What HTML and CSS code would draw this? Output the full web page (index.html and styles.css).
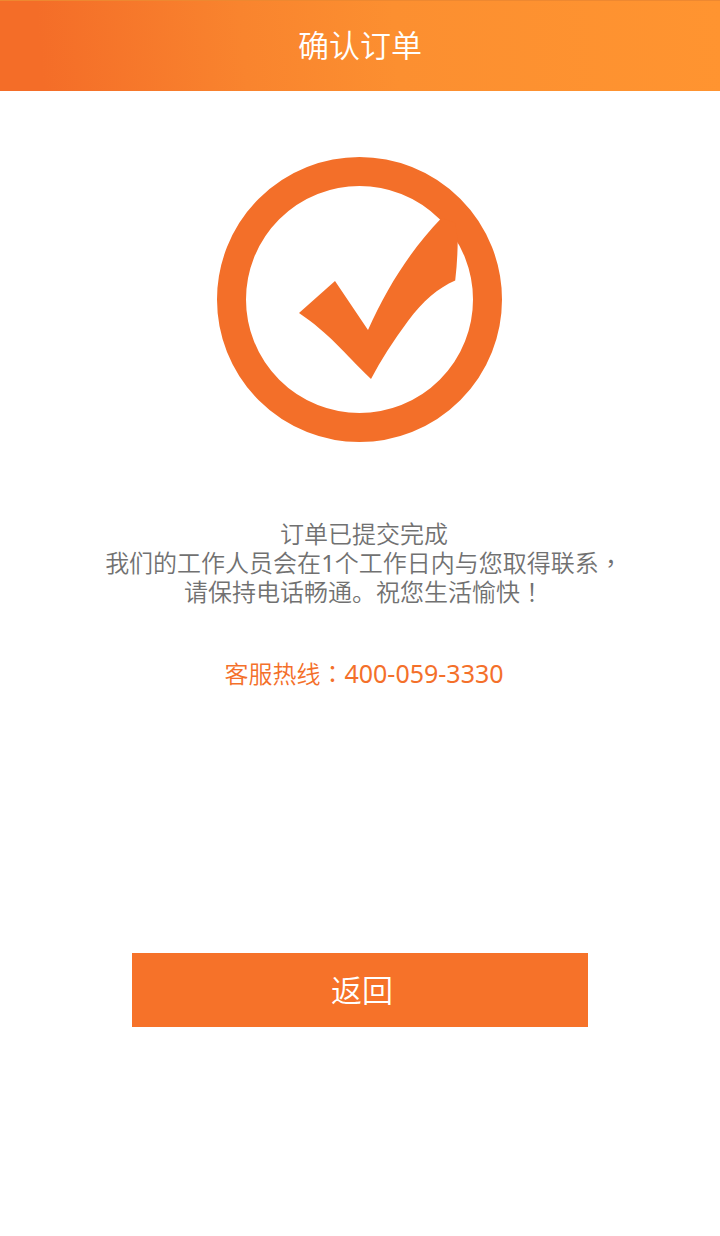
FILE: index.html
```html
<!DOCTYPE html>
<html lang="zh-CN">
<head>
<meta charset="utf-8">
<meta name="viewport" content="width=device-width, initial-scale=1">
<title>确认订单</title>
<link rel="stylesheet" href="styles.css">
</head>
<body>
<header class="header"><h1 class="title">确认订单</h1></header>
<main class="content">
<svg class="success-icon" viewBox="0 0 286 286" aria-hidden="true">
<circle class="ring" cx="142.5" cy="143.5" r="128"/>
<path class="tick" d="M82 157L118 125L151 174C170 132 192 96 224.500 62L238 67L240.700 82Q240.700 104 238.200 124.500C221 132 206 145 191 165Q168 196 154 223C126 196 113 178 82 157Z"/>
</svg>
<div class="notice">
<p class="message">订单已提交完成<br>我们的工作人员会在<span class="digit">1</span>个工作日内与您取得联系<span class="mark" lang="zh-TW">，</span><br>请保持电话畅通。祝您生活愉快<span class="mark" lang="zh-TW">！</span></p>
<p class="hotline">客服热线<span class="mark" lang="zh-TW">：</span><a class="phone" href="tel:4000593330">400-059-3330</a></p>
</div>
<button class="back" type="button">返回</button>
</main>
</body>
</html>
```
FILE: styles.css
```css
* { box-sizing: border-box; }
body {
  margin: 0;
  background: #fff;
  font-family: "Noto Sans", "Noto Sans CJK SC", sans-serif;
}
.header {
  display: flex;
  align-items: center;
  justify-content: center;
  height: 91px;
  padding-bottom: 5px;
  border-top: 1px solid #ee8830;
  background: linear-gradient(85deg, #f46d28 6%, #f9842e 34%, #fc8f30 55%, #ff9430);
}
.title {
  margin: 0;
  color: #fff;
  font-size: 31px;
  font-weight: 350;
}
.content {
  display: flex;
  flex-direction: column;
  align-items: center;
  padding: 65px 24px;
  text-align: center;
}
.success-icon { width: 286px; height: 286px; }
.ring { fill: none; stroke: #f36f29; stroke-width: 29; }
.tick { fill: #f36f29; }
.notice {
  padding-left: 8px;
  font-size: 24px;
  font-weight: 350;
  line-height: 29px;
}
.message {
  margin: 77px 0 0;
  color: #717171;
}
.hotline {
  margin: 53px 0 0;
  color: #f4702a;
}
.mark {
  font-family: "Noto Sans CJK TC", sans-serif;
  line-height: 1;
}
.digit { font-weight: 400; }
.phone {
  color: inherit;
  font-size: 25px;
  font-weight: 400;
  line-height: 1;
  text-decoration: none;
}
.back {
  width: 456px;
  max-width: 100%;
  height: 74px;
  margin-top: 265px;
  padding: 0 0 4px 4px;
  border: 0;
  background: #f67229;
  color: #fff;
  font-family: inherit;
  font-size: 31px;
  font-weight: 350;
}
```
